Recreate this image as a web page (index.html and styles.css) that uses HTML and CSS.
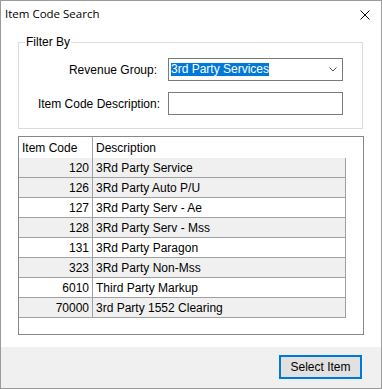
FILE: index.html
```html
<!DOCTYPE html>
<html lang="en">
<head>
    <meta charset="UTF-8">
    <meta name="viewport" content="width=device-width, initial-scale=1.0">
    <title>Item Code Search</title>
    <link rel="stylesheet" href="styles.css">
</head>
<body>
    <div class="window">
        <div class="titlebar">
            <span class="title">Item Code Search</span>
            <svg class="close-icon" width="10" height="10" viewBox="0 0 10 10">
                <path d="M0.5 0.5 L9.5 9.5 M9.5 0.5 L0.5 9.5" stroke="#000" stroke-width="1" fill="none"/>
            </svg>
        </div>

        <div class="content">
            <fieldset class="filter">
                <legend>Filter By</legend>
                <div class="filter-grid">
                    <label class="rev-label">Revenue Group:</label>
                    <div class="select-box">
                        <span class="selected-text">3rd Party Services</span>
                        <svg class="chevron" width="8" height="5" viewBox="0 0 8 5">
                            <path d="M0.5 0.5 L4 4 L7.5 0.5" stroke="#555" stroke-width="1" fill="none"/>
                        </svg>
                    </div>
                    <label for="itemDesc">Item Code Description:</label>
                    <input type="text" id="itemDesc" class="text-input">
                </div>
            </fieldset>

            <div class="list-frame">
                <table class="item-table">
                    <thead>
                        <tr>
                            <th class="col-code">Item Code</th>
                            <th class="col-desc">Description</th>
                        </tr>
                    </thead>
                    <tbody>
                        <tr class="shade"><td class="num">120</td><td>3Rd Party Service</td></tr>
                        <tr class="shade"><td class="num">126</td><td>3Rd Party Auto P/U</td></tr>
                        <tr><td class="num">127</td><td>3Rd Party Serv - Ae</td></tr>
                        <tr class="shade"><td class="num">128</td><td>3Rd Party Serv - Mss</td></tr>
                        <tr><td class="num">131</td><td>3Rd Party Paragon</td></tr>
                        <tr class="shade"><td class="num">323</td><td>3Rd Party Non-Mss</td></tr>
                        <tr><td class="num">6010</td><td>Third Party Markup</td></tr>
                        <tr class="shade"><td class="num">70000</td><td>3rd Party 1552 Clearing</td></tr>
                    </tbody>
                </table>
            </div>
        </div>

        <div class="footer">
            <button class="select-btn">Select Item</button>
        </div>
    </div>
</body>
</html>
```

FILE: styles.css
```css
body {
    margin: 0;
    padding: 0;
    font-family: "Liberation Sans", Arial, sans-serif;
    font-size: 12px;
    color: #000;
    background-color: #fff;
}

.window {
    width: 382px;
    height: 389px;
    box-sizing: border-box;
    border: 1px solid #9b9b9b;
    display: flex;
    flex-direction: column;
    background-color: #fff;
}

/* title bar */
.titlebar {
    height: 30px;
    box-sizing: border-box;
    display: flex;
    justify-content: space-between;
    align-items: flex-start;
    padding: 6px 11px 0 4px;
}

.title {
    font-family: "Open Sans", "Noto Sans", sans-serif;
    font-size: 11.5px;
    line-height: 14px;
}

.close-icon {
    margin-top: 3px;
}

/* main area */
.content {
    flex: 1;
    padding: 4px 0 0 17px;
}

.filter {
    width: 345px;
    box-sizing: border-box;
    margin: 0;
    padding: 9px 0 13px 0;
    border: 1px solid #dcdcdc;
}

.filter legend {
    margin-left: 6px;
    padding: 0 1px;
    line-height: 14px;
}

.filter-grid {
    display: grid;
    grid-template-columns: 141px 175px;
    column-gap: 8px;
    row-gap: 11px;
    align-items: center;
}

.filter-grid label {
    text-align: right;
}

.filter-grid .rev-label {
    margin-right: 3px;
}

.select-box {
    height: 23px;
    box-sizing: border-box;
    border: 1px solid #7a7a7a;
    display: flex;
    align-items: center;
    justify-content: space-between;
    padding: 0 5px 0 2px;
}

.selected-text {
    background-color: #0078d7;
    color: #fff;
    line-height: 13px;
}

.text-input {
    height: 23px;
    width: 175px;
    box-sizing: border-box;
    border: 1px solid #7a7a7a;
    margin: 0;
    padding: 0 3px;
    font: inherit;
    outline: none;
}

/* item list */
.list-frame {
    width: 346px;
    height: 199px;
    box-sizing: border-box;
    margin-top: 7px;
    border: 1px solid #828790;
    background-color: #fff;
}

.item-table {
    width: 327px;
    border-collapse: collapse;
    table-layout: fixed;
}

.item-table th {
    height: 20px;
    padding: 1px 3px 0 3px;
    font-weight: normal;
    text-align: left;
}

.item-table .col-code {
    width: 67px;
    border-right: 1px solid #a0a0a0;
}

.item-table td {
    height: 18px;
    padding: 1px 3px 0 3px;
    border-right: 1px solid #a0a0a0;
    border-bottom: 1px solid #a0a0a0;
    white-space: nowrap;
}

.item-table td.num {
    text-align: right;
}

.item-table tr.shade td {
    background-color: #f0f0f0;
}

/* bottom bar */
.footer {
    height: 41px;
    box-sizing: border-box;
    background-color: #f0f0f0;
    display: flex;
    justify-content: flex-end;
    align-items: flex-start;
    padding: 8px 19px 0 0;
}

.select-btn {
    width: 83px;
    height: 24px;
    box-sizing: border-box;
    border: 2px solid #0078d7;
    background-color: #e1e1e1;
    font: inherit;
    color: #000;
    padding: 0;
}
```
